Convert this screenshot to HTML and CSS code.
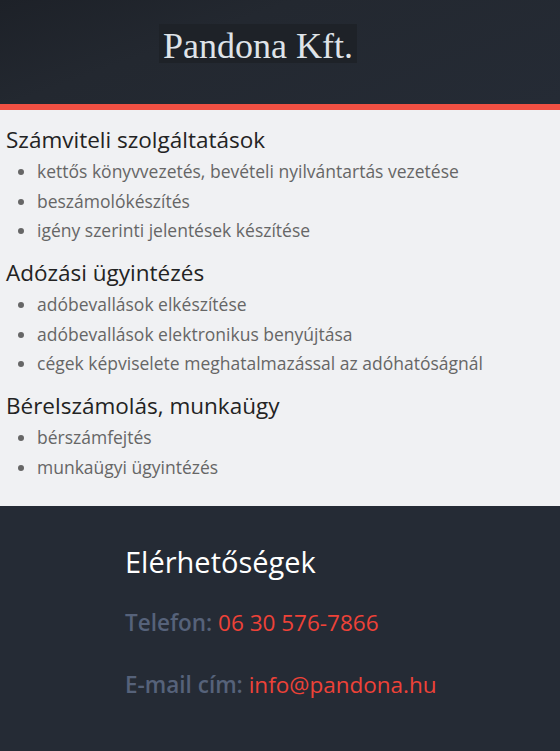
FILE: index.html
```html
<!DOCTYPE html>
<html>
<head lang="hu">
    <meta charset="UTF-8">
    <title>Pandona Kft.</title>
    <link rel="stylesheet" href="styles.css">
</head>
<body>
<div id="header">
    <h1 class="logo">Pandona Kft.</h1>
</div>
<div id="content">
    <h2>Számviteli szolgáltatások</h2>
    <ul>
        <li>kettős könyvvezetés, bevételi nyilvántartás vezetése</li>
        <li>beszámolókészítés</li>
        <li>igény szerinti jelentések készítése</li>
    </ul>
    <h2>Adózási ügyintézés</h2>
    <ul>
        <li>adóbevallások elkészítése</li>
        <li>adóbevallások elektronikus benyújtása</li>
        <li>cégek képviselete meghatalmazással az adóhatóságnál</li>
    </ul>
    <h2>Bérelszámolás, munkaügy</h2>
    <ul>
        <li>bérszámfejtés</li>
        <li>munkaügyi ügyintézés</li>
    </ul>
</div>
<div id="footer">
    <div class="contact">
        <h3>Elérhetőségek</h3>
        <p><span class="label">Telefon:</span> <a href="javascript:;">06 30 576-7866</a></p>
        <p><span class="label">E-mail cím:</span> <a href="javascript:;">info@pandona.hu</a></p>
    </div>
</div>
</body>
</html>
```

FILE: styles.css
```css
*{
    margin: 0;
    padding: 0;
}
html,body{
    background-color: #252b35;
}
body{
    font-family: "Open Sans", "Noto Sans", sans-serif;
}
#header{
    height: 110px;
    border-bottom: 6px solid #f15043;
    background: linear-gradient(160deg, #1d2128 0%, #232830 35%, #252b35 100%);
    padding-top: 24px;
    box-sizing: border-box;
}
.logo{
    width: 198px;
    height: 39px;
    margin-left: 159px;
    padding-left: 4px;
    box-sizing: border-box;
    background-color: #1e2228;
    font-family: "Liberation Serif", "DejaVu Serif", serif;
    font-weight: normal;
    font-size: 36px;
    line-height: 44px;
    color: #dfe3e8;
    white-space: nowrap;
}
#content{
    background-color: #f0f1f3;
    padding: 15px 6px 24px;
}
#content h2{
    font-size: 22.5px;
    font-weight: normal;
    line-height: 30px;
    color: #232323;
    margin: 12.5px 0 2px;
}
#content h2:first-child{
    margin-top: 0;
}
#content ul{
    padding-left: 31px;
}
#content li{
    font-size: 17.5px;
    line-height: 29.5px;
    color: #666;
}
#footer{
    padding: 38px 0 16px 125px;
}
.contact h3{
    font-size: 29px;
    font-weight: normal;
    color: #fff;
    line-height: 36px;
    margin-bottom: 29.5px;
}
.contact p{
    font-size: 22.5px;
    line-height: 26px;
    margin-bottom: 36.7px;
}
.contact p:last-child{
    margin-bottom: 0;
}
.label{
    color: #56627a;
    font-weight: 600;
}
.contact a{
    color: #ee4238;
    text-decoration: none;
}
```
